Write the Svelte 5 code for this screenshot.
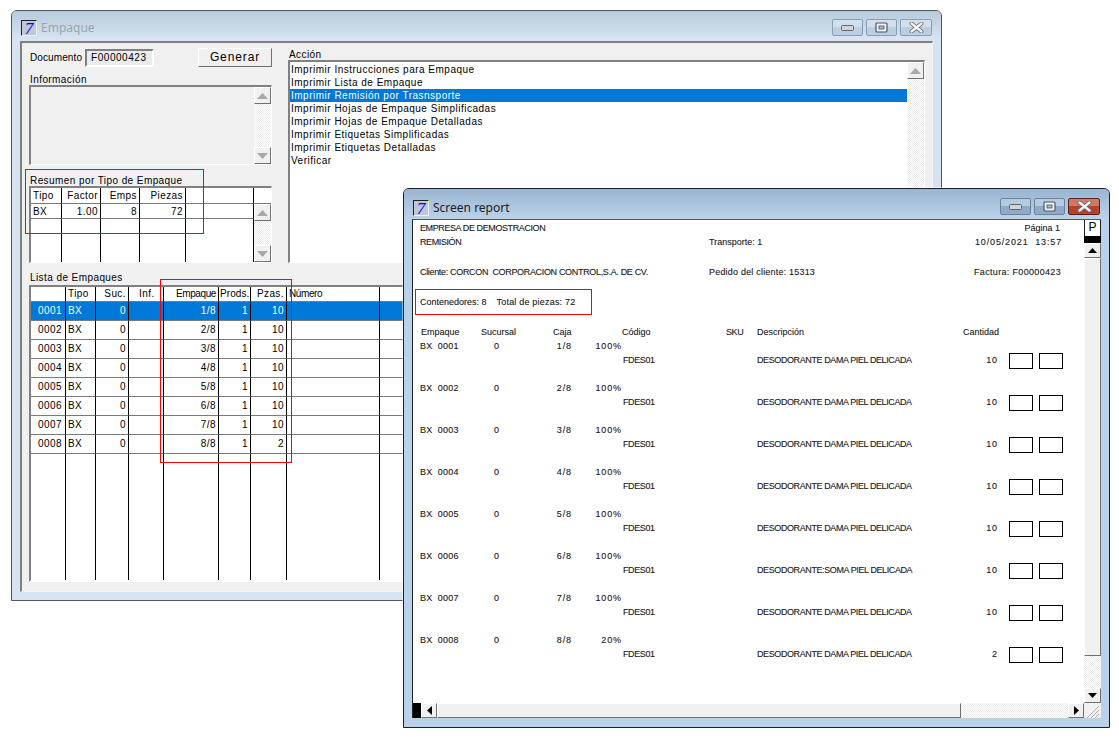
<script>
	// Two overlapping legacy windows: the Empaque form and its screen report.
	const actions = [
		'Imprimir Instrucciones para Empaque',
		'Imprimir Lista de Empaque',
		'Imprimir Remisión por Trasnsporte',
		'Imprimir Hojas de Empaque Simplificadas',
		'Imprimir Hojas de Empaque Detalladas',
		'Imprimir Etiquetas Simplificadas',
		'Imprimir Etiquetas Detalladas',
		'Verificar'
	];
	const packs = [
		['0001', '1/8', '10'],
		['0002', '2/8', '10'],
		['0003', '3/8', '10'],
		['0004', '4/8', '10'],
		['0005', '5/8', '10'],
		['0006', '6/8', '10'],
		['0007', '7/8', '10'],
		['0008', '8/8', '2']
	];
	const desc = 'DESODORANTE DAMA PIEL DELICADA';
</script>

{#snippet winButtons(active)}
	<div class="wbtns" class:active>
		<span class="wbtn">
			<svg width="13" height="6" viewBox="0 0 13 6"><rect x=".5" y=".5" width="12" height="5" rx="1" fill="#d4d4d4" stroke="#5c6670"/></svg>
		</span>
		<span class="wbtn">
			<svg width="13" height="11" viewBox="0 0 13 11"><rect x="1" y="1" width="11" height="9" rx="1" fill="#eef2f6" stroke="#4c5560" stroke-width="1.2"/><rect x="4" y="4" width="5" height="3" fill="#aeb8c4" stroke="#4c5560" stroke-width=".8"/></svg>
		</span>
		<span class="wbtn close">
			<svg width="15" height="11" viewBox="0 0 15 11"><path d="M2.5 1.5 L12.5 9.5 M12.5 1.5 L2.5 9.5" stroke="#5c6670" stroke-width="4" stroke-linecap="round"/><path d="M2.5 1.5 L12.5 9.5 M12.5 1.5 L2.5 9.5" stroke="#f4f4f4" stroke-width="2.4" stroke-linecap="round"/></svg>
		</span>
	</div>
{/snippet}

{#snippet vscroll()}
	<div class="vscroll">
		<span class="sbtn"><svg width="11" height="6" viewBox="0 0 11 6"><path d="M5.5 0 L11 6 L0 6 Z" /></svg></span>
		<span class="track"></span>
		<span class="sbtn"><svg width="11" height="6" viewBox="0 0 11 6"><path d="M0 0 L11 0 L5.5 6 Z" /></svg></span>
	</div>
{/snippet}

<div class="desk">
	<section class="win form">
		<header class="title">
			<span class="seven">7</span>
			<span class="caption">Empaque</span>
			{@render winButtons(false)}
		</header>
		<div class="client">
			<div class="top">
				<div class="left">
					<div class="docrow">
						<span class="doclabel">Documento :</span>
						<span class="docinput">F00000423</span>
						<span class="generar">Generar</span>
					</div>
					<div class="lbl infolbl">Información</div>
					<div class="infobox">
						<span class="infotext"></span>
						{@render vscroll()}
					</div>
					<div class="lbl resumenlbl">Resumen por Tipo de Empaque</div>
					<div class="resumen">
						<div class="c h">Tipo</div>
						<div class="c h r">Factor</div>
						<div class="c h r">Emps</div>
						<div class="c h r">Piezas</div>
						<div class="c h"></div>
						<div class="c h last"></div>

						<div class="c">BX</div>
						<div class="c r">1.00</div>
						<div class="c r">8</div>
						<div class="c r">72</div>
						<div class="c"></div>
						<div class="rscroll">{@render vscroll()}</div>

						<div class="c fill"></div>
						<div class="c fill"></div>
						<div class="c fill"></div>
						<div class="c fill"></div>
						<div class="c fill"></div>
					</div>
				</div>
				<div class="right">
					<div class="lbl accionlbl">Acción</div>
					<div class="actions">
						<ul>
							{#each actions as a, i}
								<li class:sel={i === 2}>{a}</li>
							{/each}
						</ul>
						{@render vscroll()}
					</div>
				</div>
			</div>
			<div class="lbl listalbl">Lista de Empaques</div>
			<div class="lista">
				<div class="lrow head">
					<div class="c"></div>
					<div class="c">Tipo</div>
					<div class="c r">Suc.</div>
					<div class="c ctr">Inf.</div>
					<div class="c r tight">Empaque</div>
					<div class="c prods">Prods.</div>
					<div class="c r">Pzas.</div>
					<div class="c tight">Número</div>
					<div class="c end"></div>
				</div>
				{#each packs as p, i}
					<div class="lrow" class:on={i === 0}>
						<div class="c r sno">{p[0]}</div>
						<div class="c">BX</div>
						<div class="c r">0</div>
						<div class="c"></div>
						<div class="c r">{p[1]}</div>
						<div class="c r">1</div>
						<div class="c r">{p[2]}</div>
						<div class="c"></div>
						<div class="c end"></div>
					</div>
				{/each}
				<div class="lrow rest">
					{#each Array(9) as _, i}
						<div class="c fill" class:end={i === 8}></div>
					{/each}
				</div>
			</div>
		</div>
		<div class="mark m1"></div>
		<div class="mark m2"></div>
	</section>

	<section class="win report">
		<header class="title">
			<span class="seven">7</span>
			<span class="caption">Screen report</span>
			{@render winButtons(true)}
		</header>
		<div class="rclient">
			<div class="page">
				<div class="pagehead">
					<span class="caps">EMPRESA DE DEMOSTRACION</span><span></span><span class="ar pg">Página 1</span>
					<span class="caps">REMISIÓN</span><span>Transporte: 1</span><span class="ar date">10/05/2021&nbsp;&nbsp;13:57</span>
				</div>
				<div class="pagehead client-row">
					<span class="cli">Cliente: CORCON&nbsp;&nbsp;CORPORACION CONTROL,S.A. DE CV.</span><span class="ped">Pedido del cliente: 15313</span><span class="ar fact">Factura: F00000423</span>
				</div>
				<div class="totals"><span>Contenedores: 8</span><span class="ped">Total de piezas: 72</span></div>
				<div class="cols">
					<span>Empaque</span><span>Sucursal</span><span>Caja</span><span>Código</span><span class="caps">SKU</span><span>Descripción</span><span>Cantidad</span>
				</div>
				{#each packs as p, i}
					<div class="block">
						<span class="g1">BX&nbsp;&nbsp;{p[0]}</span>
						<span class="g2">0</span>
						<span class="g3 dig">{p[1]}</span>
						<span class="g4 dig">{i === 7 ? '20%' : '100%'}</span>
						<span class="g5 caps">FDES01</span>
						<span class="g6 caps">{i === 5 ? desc.replace(' DAMA', ':SOMA') : desc}</span>
						<span class="g7 dig">{p[2]}</span>
						<span class="g8"><i></i><i></i></span>
					</div>
				{/each}
			</div>
			<div class="rv">
				<div class="pcell">P</div>
				<div class="blk"></div>
				<span class="sbtn dark low"><svg width="9" height="5" viewBox="0 0 9 5"><path d="M4.5 0 L9 5 L0 5 Z" /></svg></span>
				<span class="thumb"></span>
				<span class="track"></span>
				<span class="sbtn dark low"><svg width="9" height="5" viewBox="0 0 9 5"><path d="M0 0 L9 0 L4.5 5 Z" /></svg></span>
			</div>
			<div class="rh">
				<span class="hblk"></span>
				<span class="sbtn dark lr"><svg width="5" height="9" viewBox="0 0 5 9"><path d="M5 0 L5 9 L0 4.5 Z" /></svg></span>
				<span class="hthumb"></span>
				<span class="track"></span>
				<span class="sbtn dark lr"><svg width="5" height="9" viewBox="0 0 5 9"><path d="M0 0 L0 9 L5 4.5 Z" /></svg></span>
			</div>
			<div class="grip">
				<svg width="16" height="15" viewBox="0 0 16 15"><path d="M15 3 L3 15 M15 7 L7 15 M15 11 L11 15" stroke="#b0b0b0" fill="none"/></svg>
			</div>
		</div>
		<div class="mark m3"></div>
	</section>
</div>

<style>
	:global(body) {
		margin: 0;
		background: #fff;
	}
	.desk {
		position: relative;
		width: 1119px;
		height: 740px;
		overflow: hidden;
		background: #fff;
		font-family: "Liberation Sans", Arial, sans-serif;
		font-size: 10px;
		color: #000;
	}

	/* windows */
	.win {
		position: absolute;
		box-sizing: border-box;
		display: flex;
		flex-direction: column;
		border: 1px solid #50555a;
		border-radius: 6px 6px 0 0;
		padding: 0 8px 8px;
	}
	.form {
		left: 11px;
		top: 10px;
		width: 931px;
		height: 591px;
		background: #d6e4f2;
	}
	.report {
		left: 403px;
		top: 188px;
		width: 707px;
		height: 540px;
		background: #b9d1ea;
		border-color: #1c2024;
		box-shadow: 0 0 0 1px rgba(255, 255, 255, 0.5);
	}
	.title {
		flex: none;
		display: flex;
		align-items: flex-start;
		height: 30px;
		margin: 0 -8px;
		padding: 8px 9px 0 9px;
		box-sizing: border-box;
		border-radius: 5px 5px 0 0;
		background: linear-gradient(#b8cadb, #d8e6f4);
	}
	.report .title {
		background: linear-gradient(#9ab5d2, #bcd2e9);
		padding-top: 9px;
	}
	.seven {
		flex: none;
		box-sizing: border-box;
		width: 16px;
		height: 16px;
		margin-top: 1px;
		border: 1px solid;
		border-color: #202020 #f0f0f0 #f0f0f0 #202020;
		background: #bfc9d6;
		color: #0000e6;
		font: italic 17px/15px "Liberation Serif", serif;
		text-align: center;
	}
	.report .seven {
		margin-top: 2px;
	}
	.caption {
		margin-left: 4px;
		font: 12px/18px "Noto Sans", sans-serif;
		color: #9aa4ae;
	}
	.report .caption {
		margin-top: 1px;
		color: #1c2024;
	}
	.wbtns {
		display: flex;
		gap: 3px;
		margin-left: auto;
	}
	.wbtn {
		display: flex;
		align-items: center;
		justify-content: center;
		box-sizing: border-box;
		width: 31px;
		height: 17px;
		border: 1px solid #8a9db2;
		border-radius: 2px;
		background: linear-gradient(#d2e0ee 50%, #bccfe2 50%);
	}
	.wbtn.close {
		width: 32px;
	}
	.active .wbtn {
		background: linear-gradient(#b5cbe2 50%, #8fabc9 50%);
		border-color: #6d8199;
	}
	.active .close {
		background: linear-gradient(#d07a66 50%, #b8412c 50%);
		border-color: #5a1f1a;
	}

	/* form client */
	.client {
		flex: 1;
		display: flex;
		flex-direction: column;
		min-height: 0;
		border: solid;
		border-width: 2px 1px 1px 2px;
		border-color: #808080 #f4f4f4 #f4f4f4 #808080;
		background: #f0f0f0;
		padding: 0 8px 9px 7px;
		letter-spacing: 0.42px;
	}
	.top {
		flex: none;
		display: flex;
		height: 220px;
		gap: 16px;
	}
	.left {
		width: 243px;
		flex: none;
		display: flex;
		flex-direction: column;
	}
	.right {
		flex: 1;
		display: flex;
		flex-direction: column;
		margin-right: -1px;
	}
	.lbl {
		line-height: 13px;
		white-space: nowrap;
	}
	.docrow {
		display: flex;
		align-items: center;
		height: 19px;
		margin-top: 5px;
	}
	.doclabel {
		width: 55px;
		margin-left: 1px;
		flex: none;
		white-space: nowrap;
		letter-spacing: 0.1px;
	}
	.docinput {
		box-sizing: border-box;
		width: 70px;
		height: 18px;
		line-height: 14px;
		padding-left: 4px;
		border: 2px solid;
		border-color: #808080 #fff #fff #808080;
		background: #ebebeb;
		letter-spacing: 0.55px;
	}
	.generar {
		box-sizing: border-box;
		width: 75px;
		height: 19px;
		margin-left: 44px;
		border: 1px solid;
		border-color: #fff #707070 #707070 #fff;
		text-align: center;
		font-size: 12px;
		line-height: 16px;
		letter-spacing: 0.9px;
	}
	.infolbl {
		margin-top: 6px;
		margin-left: 1px;
	}
	.infobox {
		flex: none;
		box-sizing: border-box;
		display: flex;
		height: 80px;
		margin-top: -1px;
		border: solid;
		border-width: 2px 1px 1px 2px;
		border-color: #808080 #fff #fff #808080;
	}
	.infotext {
		flex: 1;
	}
	.resumenlbl {
		margin-top: 9px;
		margin-left: 1px;
	}
	.resumen {
		flex: none;
		box-sizing: border-box;
		display: grid;
		grid-template-columns: 31px 39px 39px 46px 68px 17px;
		grid-template-rows: 16px 15px 1fr;
		height: 77px;
		margin-top: -1px;
		border: solid;
		border-width: 2px 1px 1px 2px;
		border-color: #808080 #fff #fff #808080;
		background: #fff;
	}
	.c {
		box-sizing: border-box;
		min-width: 0;
		padding: 0 2px;
		line-height: 15px;
		white-space: nowrap;
		border-right: 1px solid #000;
		border-bottom: 1px solid #7a7a7a;
	}
	.c.r {
		text-align: right;
	}
	.c.fill {
		border-bottom: 0;
	}
	.c.last {
		border-right: 0;
	}
	.rscroll {
		grid-row: 2 / span 2;
		grid-column: 6;
		display: flex;
	}
	.vscroll {
		flex: none;
		width: 17px;
		display: flex;
		flex-direction: column;
	}
	.sbtn {
		flex: none;
		box-sizing: border-box;
		display: flex;
		align-items: center;
		justify-content: center;
		height: 17px;
		border: 1px solid;
		border-color: #fff #707070 #707070 #fff;
		background: #f0f0f0;
		fill: #a8a8a8;
	}
	.sbtn.dark {
		fill: #000;
	}
	.sbtn.low {
		height: 15px;
	}
	.track {
		flex: 1;
		background: repeating-conic-gradient(#fff 0 25%, #ececec 0 50%) 0 0 / 2px 2px;
	}
	.accionlbl {
		margin-top: 5px;
		margin-left: 1px;
	}
	.actions {
		flex: 1;
		display: flex;
		min-height: 0;
		margin-top: -1px;
		border: solid;
		border-width: 2px 1px 1px 2px;
		border-color: #808080 #fff #fff #808080;
		background: #fff;
	}
	.actions ul {
		flex: 1;
		list-style: none;
		margin: 0;
		padding: 1px 0 0;
	}
	.actions li {
		height: 13px;
		line-height: 13px;
		padding-left: 1px;
		white-space: nowrap;
		letter-spacing: 0.5px;
	}
	.actions li.sel {
		background: #0078d7;
		color: #fff;
	}
	.listalbl {
		margin: 8px 0 1px 1px;
	}
	.lista {
		flex: 1;
		min-height: 0;
		box-sizing: border-box;
		display: flex;
		flex-direction: column;
		border: solid;
		border-width: 2px 1px 2px 2px;
		border-color: #808080 #fff #fff #808080;
		background: #fff;
	}
	.lrow {
		flex: none;
		display: grid;
		grid-template-columns: 35px 30px 33px 35px 55px 32px 36px 93px 1fr;
		height: 19px;
	}
	.lrow.head {
		height: 15px;
	}
	.lrow.rest {
		flex: 1;
	}
	.lrow.on {
		background: #0078d7;
		color: #fff;
	}
	.lrow .c {
		line-height: 18px;
	}
	.lrow.head .c {
		line-height: 14px;
	}
	.lrow .c.ctr {
		padding-left: 10px;
	}
	.lrow .c.tight {
		letter-spacing: -0.4px;
	}
	.lrow .c.prods {
		padding: 0 0 0 1px;
		letter-spacing: 0.1px;
	}
	.lrow .sno {
		padding-right: 3px;
	}
	.lrow .c.end {
		border-right: 0;
	}
	.mark {
		position: absolute;
		z-index: 3;
		box-sizing: border-box;
		border: 1px solid #f00;
		pointer-events: none;
	}
	.m1 {
		left: 13px;
		top: 158px;
		width: 179px;
		height: 65px;
	}
	.m2 {
		left: 148px;
		top: 268px;
		width: 132px;
		height: 184px;
	}
	.m3 {
		left: 11px;
		top: 100px;
		width: 177px;
		height: 26px;
	}

	/* report */
	.rclient {
		flex: 1;
		min-height: 0;
		display: grid;
		grid-template-columns: 1fr 17px;
		grid-template-rows: 1fr 15px;
		margin-bottom: 1px;
		background: #fff;
		border-top: 1px solid #555;
		border-left: 1px solid #222;
	}
	/* report text is a narrow face in the original, so tune tracking per kind of string */
	.page {
		min-width: 0;
		min-height: 0;
		overflow: hidden;
		padding: 1px 22px 0 7px;
		color: #1e1e1e;
		font-size: 9px;
		line-height: 14px;
		text-shadow: 0.3px 0 0 rgba(230, 130, 30, 0.3), -0.3px 0 0 rgba(30, 110, 230, 0.3);
	}
	.caps {
		letter-spacing: -0.4px;
	}
	.cli {
		letter-spacing: -0.33px;
	}
	.ped {
		letter-spacing: 0.2px;
	}
	.dig {
		letter-spacing: 0.9px;
	}
	.date {
		letter-spacing: 0.85px;
	}
	.pagehead {
		display: grid;
		grid-template-columns: 289px 1fr auto;
		white-space: nowrap;
	}
	.ar {
		text-align: right;
	}
	.pg {
		padding-right: 2px;
	}
	.fact {
		padding-right: 1px;
		letter-spacing: 0.33px;
	}
	.client-row {
		margin-top: 16px;
	}
	.totals {
		display: flex;
		gap: 10px;
		margin-top: 16px;
		white-space: nowrap;
	}
	.cols {
		display: grid;
		grid-template-columns: 60px 72px 69px 104px 31px 206px 1fr;
		margin: 16px 0 0 1px;
		white-space: nowrap;
	}
	.block {
		display: grid;
		grid-template-columns: 74px 51px 27px 51px 134px 216px 25px;
		grid-auto-rows: 14px;
		height: 42px;
		white-space: nowrap;
	}
	.g1 {
		grid-column: 1;
		letter-spacing: 0.2px;
	}
	.g2 {
		grid-column: 2;
	}
	.g3 {
		grid-column: 3;
		text-align: right;
	}
	.g4 {
		grid-column: 4;
		text-align: right;
		padding-right: 1px;
	}
	.g5 {
		grid-column: 5;
		grid-row: 2;
	}
	.g6 {
		grid-column: 6;
		grid-row: 2;
	}
	.g7 {
		grid-column: 7;
		grid-row: 2;
		text-align: right;
	}
	.g8 {
		grid-column: 8;
		grid-row: 2;
		display: flex;
		gap: 6px;
		margin-left: 11px;
	}
	.g8 i {
		display: block;
		box-sizing: border-box;
		width: 24px;
		height: 16px;
		border: 1px solid #000;
	}
	.rv {
		display: flex;
		flex-direction: column;
		min-height: 0;
	}
	.pcell {
		flex: none;
		height: 16px;
		line-height: 15px;
		text-align: center;
		font-size: 12px;
		border: solid #222;
		border-width: 0 1px;
	}
	.blk {
		flex: none;
		height: 7px;
		background: #000;
	}
	.thumb {
		flex: none;
		height: 398px;
		box-sizing: border-box;
		border: 1px solid;
		border-color: #fff #707070 #707070 #fff;
		background: #f0f0f0;
	}
	.rh {
		display: flex;
		min-width: 0;
	}
	.hblk {
		flex: none;
		width: 8px;
		background: #000;
	}
	.sbtn.lr {
		width: 16px;
		height: 15px;
	}
	.hthumb {
		flex: none;
		width: 524px;
		box-sizing: border-box;
		border: 1px solid;
		border-color: #fff #707070 #707070 #fff;
		background: #f0f0f0;
	}
	.grip {
		background: #f0f0f0;
		line-height: 0;
	}
</style>
